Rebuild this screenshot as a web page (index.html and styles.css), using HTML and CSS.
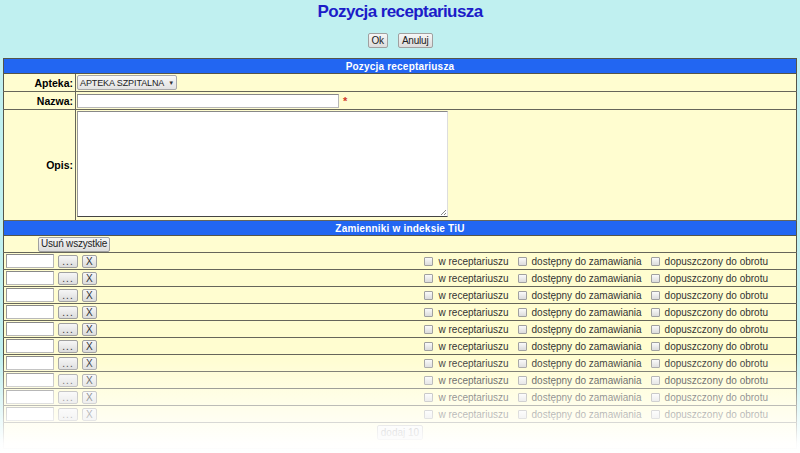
FILE: index.html
```html
<!DOCTYPE html>
<html lang="pl">
<head>
<meta charset="utf-8">
<title>Pozycja receptariusza</title>
<link rel="stylesheet" href="styles.css">
</head>
<body>
<h1 class="title">Pozycja receptariusza</h1>
<div class="actions">
  <button class="btn btn-narrow">Ok</button>
  <button class="btn btn-narrow">Anuluj</button>
</div>
<table class="form">
  <tr><th class="head" colspan="2">Pozycja receptariusza</th></tr>
  <tr class="row">
    <td class="label">Apteka:</td>
    <td class="value"><span class="select">APTEKA SZPITALNA <span class="caret">▼</span></span></td>
  </tr>
  <tr class="row">
    <td class="label">Nazwa:</td>
    <td class="value"><span class="text-input name"></span><span class="req">*</span></td>
  </tr>
  <tr class="row">
    <td class="label opis">Opis:</td>
    <td class="value"><span class="textarea"><span class="grip"></span></span></td>
  </tr>
  <tr><th class="head" colspan="2">Zamienniki w indeksie TiU</th></tr>
  <tr class="row">
    <td colspan="2" class="remove-cell"><button class="btn">Usuń wszystkie</button></td>
  </tr>
  <tbody class="items">
  </tbody>
  <tr class="last">
    <td colspan="2" class="add-cell"><button class="btn">dodaj 10</button></td>
  </tr>
</table>
<div class="fade"></div>
<script>
  const tb = document.querySelector('.items');
  let html = '';
  for (let i = 0; i < 10; i++) {
    html += '<tr class="item"><td colspan="2"><div class="item-line">' +
      '<div class="item-left"><span class="text-input code"></span><button class="btn small dots">...</button><button class="btn small">X</button></div>' +
      '<div class="item-right">' +
      '<label><span class="cb"></span>w receptariuszu</label>' +
      '<label><span class="cb"></span>dostępny do zamawiania</label>' +
      '<label><span class="cb"></span>dopuszczony do obrotu</label>' +
      '</div></div></td></tr>';
  }
  tb.innerHTML = html;
</script>
</body>
</html>
```
FILE: styles.css
```css
html, body {
  margin: 0;
  padding: 0;
  height: 453px;
  overflow: hidden;
}
body {
  background: #c0f0f0;
  font-family: "Liberation Sans", Arial, sans-serif;
  font-size: 10px;
  color: #000;
  position: relative;
}
.title {
  margin: 0;
  padding-top: 1px;
  text-align: center;
  font-family: "Liberation Sans", Arial, sans-serif;
  font-weight: bold;
  font-size: 17px;
  letter-spacing: -0.6px;
  line-height: 21px;
  color: #1c1cc8;
}
.actions {
  display: flex;
  justify-content: center;
  gap: 10px;
  margin-top: 11px;
}
.btn {
  font-family: "Liberation Sans", Arial, sans-serif;
  font-size: 10px;
  line-height: 12px;
  padding: 0 3px;
  height: 15px;
  border: 1px solid #a0a0a0;
  border-radius: 2px;
  background: linear-gradient(#f6f6f6, #dcdcdc);
  color: #222;
  margin: 0;
}
.btn-narrow {
  font-size: 10px;
  letter-spacing: -0.2px;
  padding: 0 3px;
  height: 15px;
}
.form {
  margin: 10px 3px 0 3px;
  width: 794px;
  border-collapse: collapse;
  border: 1px solid #55554a;
}
.head {
  background: #2266f2;
  color: #fff;
  font-weight: bold;
  font-size: 10px;
  letter-spacing: 0.2px;
  height: 14px;
  padding: 0;
  text-align: center;
  border-bottom: 1px solid #55554a;
}
.row td, .item td {
  background: #fffdd0;
  border-bottom: 1px solid #66665a;
  padding: 0;
}
.label {
  width: 69px;
  text-align: right;
  font-weight: bold;
  font-size: 10.5px;
  padding-right: 2px !important;
  border-right: 1px solid #66665a;
  height: 17px;
}
.value {
  padding: 0 0 0 1px !important;
  vertical-align: middle;
}
.select {
  display: inline-flex;
  align-items: center;
  gap: 4px;
  height: 13px;
  padding: 0 2px;
  border: 1px solid #a8a8a8;
  border-radius: 2px;
  background: linear-gradient(#f8f8f8, #e2e2e2);
  font-size: 9px;
  letter-spacing: -0.1px;
  color: #222;
  vertical-align: middle;
}
.caret { font-size: 6px; color: #333; }
.text-input {
  display: inline-block;
  background: #fff;
  border: 1px solid #b8b8b8;
  border-top-color: #888;
  border-left-color: #999;
  box-sizing: border-box;
  vertical-align: middle;
}
.name { width: 262px; height: 14px; }
.req {
  color: #d03a28;
  font-size: 11px;
  font-weight: bold;
  margin-left: 4px;
  vertical-align: middle;
}
.opis { height: 110px; }
.textarea {
  display: block;
  position: relative;
  width: 371px;
  height: 106px;
  box-sizing: border-box;
  background: #fff;
  border: 1px solid #999;
  border-top-color: #888;
  border-right-color: #ddd;
  border-bottom-color: #444;
  margin: 1px 0 3px 0;
}
.grip {
  position: absolute;
  right: 1px;
  bottom: 1px;
  width: 5px;
  height: 5px;
  background: linear-gradient(135deg, transparent 45%, #888 45%, #888 55%, transparent 55%, transparent 75%, #888 75%, #888 85%, transparent 85%);
}
.remove-cell {
  height: 16px;
  padding-left: 34px !important;
  vertical-align: middle;
}
.remove-cell .btn { padding: 0 2px; letter-spacing: -0.2px; }
.item td { height: 16px; }
.item-line {
  display: flex;
  align-items: center;
  justify-content: space-between;
  height: 16px;
  padding: 0 28px 0 2px;
}
.item-left {
  display: flex;
  align-items: center;
}
.code { width: 48px; height: 14px; }
.btn.small {
  height: 13px;
  line-height: 11px;
  font-size: 10px;
  color: #333;
  padding: 0 3px;
  margin-left: 4px;
}
.btn.dots { width: 20px; padding: 0; letter-spacing: 1px; }
.item-right {
  display: flex;
  align-items: center;
  gap: 9px;
  color: #333;
  font-size: 10px;
}
.item-right label {
  display: flex;
  align-items: center;
  gap: 5px;
}
.cb {
  width: 7px;
  height: 7px;
  border: 1px solid #a0a0a0;
  border-radius: 1px;
  background: linear-gradient(#fafafa, #dcdcdc);
}
.last td {
  background: #fffdd0;
  border: none;
}
.add-cell {
  text-align: center;
  height: 22px;
  padding-top: 2px;
  vertical-align: top;
}
.add-cell .btn { color: #555; }
.fade {
  position: absolute;
  left: 0;
  right: 0;
  top: 355px;
  height: 98px;
  background: linear-gradient(rgba(255,255,255,0), rgba(255,255,255,0.55) 50%, rgba(255,255,255,0.97) 90%, #fff);
  pointer-events: none;
}
```
